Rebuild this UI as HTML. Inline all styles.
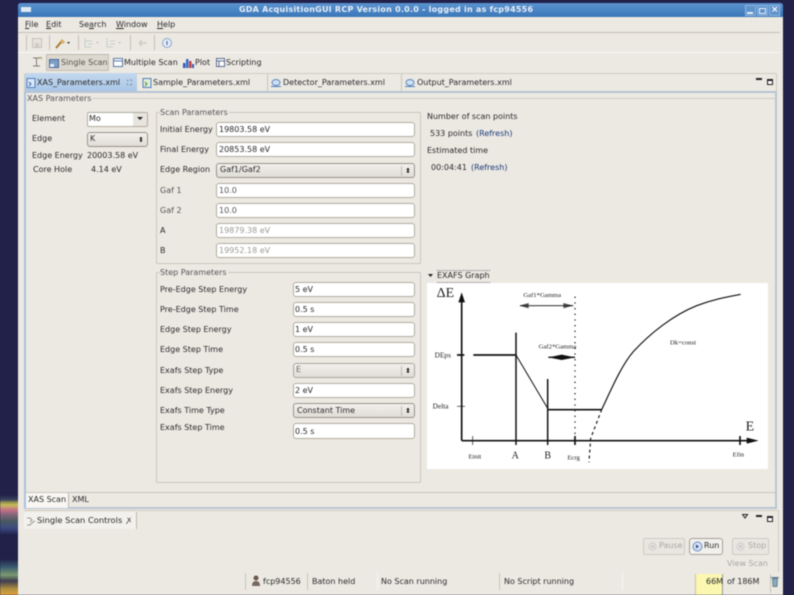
<!DOCTYPE html>
<html><head><meta charset="utf-8"><style>
html,body{margin:0;padding:0;width:794px;height:595px;overflow:hidden;background:#21214a}
#r{position:absolute;left:0;top:0;width:794px;height:595px;overflow:hidden;filter:blur(.5px);font:8px "DejaVu Sans","Liberation Sans",sans-serif;color:#2a2a2a}
#r div,#r span,#r svg{position:absolute;box-sizing:border-box}
.t{white-space:pre;line-height:12px;height:12px}
.i{background:#fff;border:1px solid #b0ac9f;border-radius:3px;height:15px}
.c{background:linear-gradient(#f2f0ec,#e0ddd6);border:1px solid #98948a;border-radius:3px;height:15px}
.g{color:#9a9a96}
.b{color:#1c3a78}
.l{background:#c4bfb4}
.ar{right:3px;top:1px;color:#222;font-size:7px;line-height:12px}
</style></head><body><div id="r">
<div style="left:0;top:495px;width:18px;height:100px;background:linear-gradient(#21214a 0,#3d4660 5px,#8b8a50 7px,#c8bc58 10px,#c47088 15px,#806478 20px,#4a5a60 26px,#3c4a80 33px,#21214a 40px,#21214a 64px,#3a5a70 72px,#7a9a70 80px,#403c50 86px,#b09040 94px,#e0a040 100px)"></div>

<div style="left:18px;top:3px;width:765px;height:592px;background:#ece9e3;border-radius:3px 3px 0 0"></div>
<div style="left:18px;top:3px;width:765px;height:14px;background:linear-gradient(#5b93cf,#3a77b9);border-radius:3px 3px 0 0"></div>
<div style="left:21px;top:7px;width:10px;height:5px;background:#dfe8f2"></div>
<div class="t" style="left:239px;top:4px;color:#e8eef6;font-weight:bold;font-size:8px;letter-spacing:.24px">GDA AcquisitionGUI RCP Version 0.0.0 - logged in as fcp94556</div>
<div style="left:745px;top:5px;width:11px;height:11px;background:#5f93cc;border:1px solid #8fb6de"></div><div style="left:747px;top:12px;width:6px;height:2px;background:#e8f0f8"></div>
<div style="left:757px;top:5px;width:11px;height:11px;background:#5f93cc;border:1px solid #8fb6de"></div><div style="left:759px;top:8px;width:7px;height:6px;border:1px solid #e8f0f8"></div>
<div style="left:769px;top:5px;width:11px;height:11px;background:#5f93cc;border:1px solid #8fb6de"></div><div class="t" style="left:771px;top:4px;color:#fff;font-weight:bold;font-size:9px">×</div>

<div class="t" style="left:25px;top:19px"><u>F</u>ile</div>
<div class="t" style="left:46px;top:19px"><u>E</u>dit</div>
<div class="t" style="left:79px;top:19px">Se<u>a</u>rch</div>
<div class="t" style="left:116px;top:19px"><u>W</u>indow</div>
<div class="t" style="left:157px;top:19px"><u>H</u>elp</div>
<div class="l" style="left:18px;top:32px;width:762px;height:1px"></div>

<div class="l" style="left:26px;top:35px;width:1px;height:15px"></div>
<div class="l" style="left:49px;top:35px;width:1px;height:15px"></div>
<div class="l" style="left:78px;top:35px;width:1px;height:15px"></div>
<div class="l" style="left:130px;top:35px;width:1px;height:15px"></div>
<div class="l" style="left:154px;top:35px;width:1px;height:15px"></div>
<svg style="left:20px;top:33px" width="160" height="20" viewBox="20 33 160 20" fill="none">
<rect x="32.5" y="38.5" width="9" height="9" stroke="#c6c2b9" fill="#e6e3dc"/><rect x="35" y="43" width="4" height="4" fill="#d0ccc3"/>
<path d="M56 48l6-7" stroke="#a87830" stroke-width="2"/><path d="M62 39l3 3-2 2-3-3z" fill="#d8b060"/><path d="M67 42h3l-1.500 2z" fill="#333"/>
<path d="M85 38v9h6M85 41h7M88 44h5" stroke="#c8ccc8"/><path d="M96 42h3l-1.500 2z" fill="#c8c5bc"/>
<path d="M107 38v9h6M110 41h5M110 44h5" stroke="#c8ccc8"/><path d="M118 42h3l-1.500 2z" fill="#c8c5bc"/>
<path d="M139 43h8M139 43l3-3M139 43l3 3" stroke="#cdcac2" stroke-width="1.500"/>
<circle cx="167" cy="43" r="4.500" stroke="#8fa6cc" fill="#e4eaf4"/><path d="M167 41v4" stroke="#3c5ca0"/>
</svg>
<div style="left:18px;top:52px;width:762px;height:1px;background:#f8f7f4"></div>

<svg style="left:30px;top:54px" width="14" height="16" viewBox="0 0 14 16" fill="none"><path d="M3 4h7M6.500 4v8M3 12h7" stroke="#807c70"/><path d="M10 3l2 2" stroke="#b09040"/></svg>
<div style="left:46px;top:54px;width:63px;height:17px;background:#dcd8cf;border:1px solid #c2bdb2;border-radius:1px"></div>
<svg style="left:49px;top:59px" width="10" height="9"><rect x=".5" y=".5" width="9" height="8" fill="#7f9fc6" stroke="#47689a"/><rect x="1" y="5" width="4" height="3" fill="#e8eef6"/></svg>
<div class="t" style="left:61px;top:57px;color:#55534e">Single Scan</div>
<svg style="left:113px;top:58px" width="10" height="9"><rect x=".5" y=".5" width="9" height="8" fill="#fff" stroke="#5878a8"/><path d="M1 3h8" stroke="#5878a8"/></svg>
<div class="t" style="left:124px;top:57px">Multiple Scan</div>
<svg style="left:183px;top:58px" width="11" height="10"><rect x="0" y="5" width="2.500" height="5" fill="#3858b0"/><rect x="3" y="1" width="2.500" height="9" fill="#3070d0"/><rect x="6" y="3" width="2.500" height="7" fill="#c04040"/><rect x="9" y="6" width="2" height="4" fill="#3858b0"/></svg>
<div class="t" style="left:195px;top:57px">Plot</div>
<svg style="left:216px;top:58px" width="9" height="9"><rect x=".5" y=".5" width="8" height="8" fill="#fff" stroke="#5c6c90"/><path d="M1 3h7M3 3v5" stroke="#5c6c90"/></svg>
<div class="t" style="left:226px;top:57px">Scripting</div>

<div style="left:24px;top:73px;width:753px;height:20px;background:#ece9e3;border:1px solid #d0ccc2;border-bottom:0;border-radius:2px 2px 0 0"></div>
<div style="left:25px;top:73px;width:112px;height:19px;background:linear-gradient(#c4d8ef,#a8c6e6);border-radius:2px 2px 0 0"></div>
<div style="left:267px;top:74px;width:1px;height:17px;background:#c9c5ba"></div>
<div style="left:401px;top:74px;width:1px;height:17px;background:#c9c5ba"></div>
<svg style="left:26px;top:77px" width="10" height="12" fill="none"><rect x="1" y="1.500" width="8" height="9" stroke="#4f7fbf" fill="#dbe8f6"/><path d="M3 5l2 2-2 2" stroke="#3a66a8"/></svg>
<div class="t" style="left:37px;top:77px">XAS_Parameters.xml</div>
<div class="t" style="left:127px;top:77px;font-size:7px">⛶</div>
<svg style="left:142px;top:77px" width="10" height="12" fill="none"><rect x="1" y="1.500" width="8" height="9" stroke="#4f7fbf" fill="#e0ecd8"/><path d="M3 5l2 2-2 2" stroke="#4a8a48"/></svg>
<div class="t" style="left:153px;top:77px">Sample_Parameters.xml</div>
<svg style="left:271px;top:77px" width="10" height="12" fill="none"><ellipse cx="5" cy="5.500" rx="4" ry="3" stroke="#5a86bd" fill="#cfe0f2"/><path d="M0 9.500h10" stroke="#4f7fbf"/></svg>
<div class="t" style="left:283px;top:77px">Detector_Parameters.xml</div>
<svg style="left:405px;top:77px" width="10" height="12" fill="none"><ellipse cx="5" cy="5.500" rx="4" ry="3" stroke="#5a86bd" fill="#cfe0f2"/><path d="M0 9.500h10" stroke="#4f7fbf"/></svg>
<div class="t" style="left:417px;top:77px">Output_Parameters.xml</div>
<div style="left:756px;top:78px;width:6px;height:2px;border:1px solid #222;border-width:1px 0;background:#fff"></div>
<div style="left:767px;top:79px;width:6px;height:6px;border:1px solid #222;border-top-width:2px;background:#fff"></div>

<div style="left:24px;top:91px;width:753px;height:418px;border:2px solid #b8c4d2;border-left-color:#a9c2de;border-radius:1px"></div>

<div style="left:26px;top:98px;width:749px;height:1px;background:#cfcbc1"></div>
<div class="t" style="left:27px;top:93px;background:#ece9e3;padding-right:1px;color:#555">XAS Parameters</div>

<div class="t" style="left:32px;top:113px">Element</div>
<div class="i" style="left:87px;top:112px;width:61px;border-radius:2px"></div>
<div style="left:133px;top:113px;width:14px;height:13px;background:#e8e5df"></div>
<div class="t" style="left:89px;top:113px">Mo</div>
<svg style="left:137px;top:117px" width="7" height="4"><path d="M0 0h6l-3 3z" fill="#222"/></svg>
<div class="t" style="left:32px;top:133px">Edge</div>
<div class="c" style="left:87px;top:132px;width:61px"><span class="ar">⬍</span></div>
<div class="t" style="left:90px;top:133px">K</div>
<div class="t" style="left:32px;top:150px">Edge Energy</div>
<div class="t" style="left:87px;top:150px">20003.58 eV</div>
<div class="t" style="left:33px;top:164px">Core Hole</div>
<div class="t" style="left:91px;top:164px">4.14 eV</div>

<div style="left:156px;top:112px;width:265px;height:152px;border:1px solid #cbc7bd;border-radius:1px"></div>
<div class="t" style="left:160px;top:107px;background:#ece9e3;padding-right:1px;color:#555">Scan Parameters</div>
<div class="t" style="left:160px;top:124px">Initial Energy</div>
<div class="i" style="left:216px;top:122px;width:199px"></div><div class="t" style="left:219px;top:124px">19803.58 eV</div>
<div class="t" style="left:160px;top:144px">Final Energy</div>
<div class="i" style="left:216px;top:142px;width:199px"></div><div class="t" style="left:219px;top:144px">20853.58 eV</div>
<div class="t" style="left:160px;top:164px">Edge Region</div>
<div class="c" style="left:216px;top:163px;width:199px"><span class="ar">⬍</span><span style="right:12px;top:2px;width:1px;height:10px;background:#bbb"></span></div><div class="t" style="left:220px;top:164px">Gaf1/Gaf2</div>
<div class="t" style="left:160px;top:185px;color:#555">Gaf 1</div>
<div class="i" style="left:216px;top:183px;width:199px"></div><div class="t" style="left:219px;top:185px;color:#555">10.0</div>
<div class="t" style="left:160px;top:205px;color:#555">Gaf 2</div>
<div class="i" style="left:216px;top:203px;width:199px"></div><div class="t" style="left:219px;top:205px;color:#555">10.0</div>
<div class="t" style="left:160px;top:225px">A</div>
<div class="i" style="left:216px;top:223px;width:199px"></div><div class="t g" style="left:219px;top:225px">19879.38 eV</div>
<div class="t" style="left:160px;top:245px">B</div>
<div class="i" style="left:216px;top:243px;width:199px"></div><div class="t g" style="left:219px;top:245px">19952.18 eV</div>

<div style="left:156px;top:272px;width:265px;height:211px;border:1px solid #cbc7bd;border-radius:1px"></div>
<div class="t" style="left:160px;top:267px;background:#ece9e3;padding-right:1px;color:#555">Step Parameters</div>
<div class="t" style="left:160px;top:284px">Pre-Edge Step Energy</div>
<div class="i" style="left:293px;top:282px;width:122px"></div><div class="t" style="left:295px;top:284px">5 eV</div>
<div class="t" style="left:160px;top:304px">Pre-Edge Step Time</div>
<div class="i" style="left:293px;top:302px;width:122px"></div><div class="t" style="left:295px;top:304px">0.5 s</div>
<div class="t" style="left:160px;top:324px">Edge Step Energy</div>
<div class="i" style="left:293px;top:322px;width:122px"></div><div class="t" style="left:295px;top:324px">1 eV</div>
<div class="t" style="left:160px;top:344px">Edge Step Time</div>
<div class="i" style="left:293px;top:342px;width:122px"></div><div class="t" style="left:295px;top:344px">0.5 s</div>
<div class="t" style="left:160px;top:365px">Exafs Step Type</div>
<div class="c" style="left:293px;top:363px;width:122px;border-color:#aaa69b"><span class="ar">⬍</span><span style="right:12px;top:2px;width:1px;height:10px;background:#bbb"></span></div><div class="t" style="left:296px;top:364px;color:#666">E</div>
<div class="t" style="left:160px;top:385px">Exafs Step Energy</div>
<div class="i" style="left:293px;top:383px;width:122px"></div><div class="t" style="left:295px;top:385px">2 eV</div>
<div class="t" style="left:160px;top:405px">Exafs Time Type</div>
<div class="c" style="left:293px;top:403px;width:122px"><span class="ar">⬍</span><span style="right:12px;top:2px;width:1px;height:10px;background:#bbb"></span></div><div class="t" style="left:297px;top:405px">Constant Time</div>
<div class="t" style="left:160px;top:422px">Exafs Step Time</div>
<div class="i" style="left:293px;top:423px;width:122px;height:16px"></div><div class="t" style="left:295px;top:426px">0.5 s</div>

<div class="t" style="left:427px;top:111px">Number of scan points</div>
<div class="t" style="left:430px;top:128px">533 points</div>
<div class="t b" style="left:476px;top:128px">(Refresh)</div>
<div class="t" style="left:427px;top:145px">Estimated time</div>
<div class="t" style="left:431px;top:162px">00:04:41</div>
<div class="t b" style="left:471px;top:162px">(Refresh)</div>

<svg style="left:428px;top:274px" width="6" height="4"><path d="M0 0h5l-2.500 3z" fill="#222"/></svg>
<div class="t" style="left:437px;top:270px;border:1px dotted #777;border-width:1px 0;height:13px;line-height:10px">EXAFS Graph</div>
<div style="left:427px;top:283px;width:341px;height:186px;background:#fff"></div>
<svg style="left:420px;top:265px" width="360" height="210" viewBox="0 0 1080 630" fill="none" stroke="#111">
<path d="M125 527V100M125 527H1000" stroke-width="5"/>
<path d="M125 82l-10 30h20zM1016 527l-36-9v18z" fill="#111" stroke="none"/>
<path d="M158 513v27M111 424h24" stroke-width="2"/>
<path d="M111 270h22M160 270H288M385 434H545" stroke-width="5"/>
<path d="M288 203V540M383 342V540" stroke-width="4.500"/>
<path d="M465 95V540" stroke-width="3.500" stroke-dasharray="4 13"/>
<path d="M465 513v27M960 513v27" stroke-width="5"/>
<path d="M288 270L383 430" stroke-width="3"/>
<path d="M545 434C575 370 605 300 640 260C690 205 760 150 830 122C880 103 920 96 962 88" stroke-width="3.500"/>
<path d="M545 434L512 520L507 592" stroke-width="3.500" stroke-dasharray="9 9"/>
<path d="M300 122H460" stroke-width="2.500"/><path d="M298 122l28-8v16zM460 122l-30-8v16z" fill="#111" stroke="none" opacity=".7"/>
<path d="M385 277H465" stroke-width="4"/><path d="M385 277l40-8v16zM465 277l-40-8v16z" fill="#111" stroke="none"/>
<g font-family="Liberation Serif,serif" fill="#222" stroke="none">
<text x="50" y="96" font-size="42">ΔE</text>
<text x="977" y="496" font-size="42">E</text>
<text x="275" y="581" font-size="30">A</text>
<text x="373" y="581" font-size="30">B</text>
<text x="310" y="96" font-size="20">Gaf1*Gamma</text>
<text x="356" y="251" font-size="20">Gaf2*Gamma</text>
<text x="750" y="238" font-size="20">Dk=const</text>
<text x="44" y="277" font-size="22">DEps</text>
<text x="38" y="431" font-size="22">Delta</text>
<text x="145" y="581" font-size="20">Einit</text>
<text x="442" y="583" font-size="20">Ecrg</text>
<text x="938" y="574" font-size="20">Efin</text>
</g>
</svg>

<div style="left:26px;top:492px;width:749px;height:1px;background:#c8c4ba"></div>
<div style="left:26px;top:493px;width:43px;height:15px;background:#f8f7f4;border-right:1px solid #bcb8ae"></div>
<div class="t" style="left:28px;top:494px">XAS Scan</div>
<div class="t" style="left:72px;top:494px">XML</div>

<div style="left:24px;top:510px;width:754px;height:1px;background:#cfcbc1"></div>
<div style="left:778px;top:510px;width:1px;height:62px;background:#cfcbc1"></div>
<div style="left:24px;top:512px;width:113px;height:17px;background:#f3f1ed;border-right:1px solid #bdb9af;border-radius:3px 0 0 0"></div>
<svg style="left:26px;top:516px" width="10" height="11" fill="none"><path d="M1 2h3l2 2-2 2M1 9h3l3-3 2-1" stroke="#9a9a8c"/></svg>
<div class="t" style="left:37px;top:514px;font-size:8.300px">Single Scan Controls</div>
<div class="t" style="left:127px;top:514px;font-size:8px">ꭗ</div>
<svg style="left:742px;top:514px" width="7" height="5" fill="none"><path d="M.5.500h5L3 4z" stroke="#222"/></svg>
<div style="left:756px;top:515px;width:6px;height:2px;border:1px solid #222;border-width:1px 0;background:#fff"></div>
<div style="left:767px;top:516px;width:6px;height:6px;border:1px solid #222;border-top-width:2px;background:#fff"></div>

<div style="left:643px;top:538px;width:42px;height:17px;border:1px solid #cfcbc2;border-radius:2px;background:#e9e6e0"></div>
<div class="t g" style="left:659px;top:540px;color:#a8a6a0">Pause</div>
<svg style="left:648px;top:542px" width="9" height="9" fill="none"><circle cx="4.500" cy="4.500" r="3.500" stroke="#ccc"/><path d="M3.500 3v3M5.500 3v3" stroke="#bbb"/></svg>
<div style="left:689px;top:538px;width:34px;height:17px;border:1px solid #a5a196;border-radius:3px;background:#f2f0ec"></div>
<svg style="left:692px;top:541px" width="11" height="11" fill="none"><circle cx="5.500" cy="5.500" r="4.500" stroke="#6a8cc4" fill="#d6e2f2"/><path d="M4 3.500l3 2-3 2z" fill="#2a4a90"/></svg>
<div class="t" style="left:704px;top:540px">Run</div>
<div style="left:732px;top:538px;width:37px;height:17px;border:1px solid #cfcbc2;border-radius:2px;background:#e9e6e0"></div>
<svg style="left:736px;top:542px" width="9" height="9" fill="none"><circle cx="4.500" cy="4.500" r="3.500" stroke="#ccc"/><rect x="3" y="3" width="3" height="3" fill="#ccc"/></svg>
<div class="t" style="left:748px;top:540px;color:#a8a6a0">Stop</div>
<div class="t" style="left:727px;top:558px;color:#a8a6a0">View Scan</div>

<div style="left:245px;top:573px;width:1px;height:17px;background:#c8c4ba"></div>
<div style="left:307px;top:573px;width:1px;height:17px;background:#c8c4ba"></div>
<div style="left:377px;top:573px;width:1px;height:17px;background:#f8f7f4"></div>
<div style="left:499px;top:573px;width:1px;height:17px;background:#c8c4ba"></div>
<div style="left:622px;top:573px;width:1px;height:17px;background:#f8f7f4"></div>
<svg style="left:251px;top:575px" width="10" height="11"><circle cx="5" cy="3" r="2.500" fill="#6a5a50"/><path d="M1 11c0-4 2-5 4-5s4 1 4 5z" fill="#77685e"/></svg>
<div class="t" style="left:263px;top:576px">fcp94556</div>
<div class="t" style="left:312px;top:576px">Baton held</div>
<div class="t" style="left:381px;top:576px">No Scan running</div>
<div class="t" style="left:504px;top:576px">No Script running</div>
<div style="left:695px;top:574px;width:28px;height:21px;background:#fbf6b0;border-left:1px solid #c8c4a8;border-right:1px solid #999"></div>
<div class="t" style="left:706px;top:576px">66M</div>
<div class="t" style="left:727px;top:576px">of 186M</div>
<div style="left:770px;top:574px;width:1px;height:19px;background:#c8c4ba"></div>
<svg style="left:771px;top:576px" width="8" height="11" fill="none"><path d="M0 1.500h8" stroke="#5a7a90"/><path d="M1.500 2.500l.5 8h4l.5-8z" fill="#8aaabc" stroke="#4a6a80" stroke-width=".7"/></svg>
</div></body></html>
